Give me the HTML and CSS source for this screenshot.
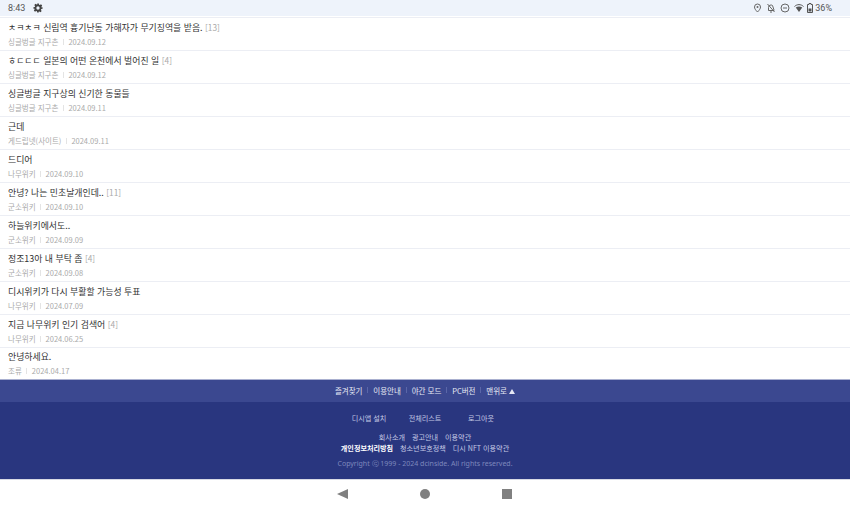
FILE: index.html

```html
<!DOCTYPE html>
<html lang="ko">
<head>
    <meta charset="UTF-8">
    <title>디시인사이드</title>
    <link rel="stylesheet" href="styles.css">
</head>
<body>
    <div class="status-bar">
        <div class="status-left">
            <span>8:43</span>
            <svg class="gear" width="10" height="10" viewBox="0 0 24 24"><path fill="#444" fill-rule="evenodd" d="M10 1h4l.6 3.2 1.9.8 2.7-1.8 2.8 2.8-1.8 2.7.8 1.9L23 10v4l-3.2.6-.8 1.9 1.8 2.7-2.8 2.8-2.7-1.8-1.9.8L14 23h-4l-.6-3.2-1.9-.8-2.7 1.8L2 18l1.8-2.7-.8-1.9L1 14v-4l3.200-.6.8-1.900L3.200 4.800 6 2l2.700 1.800 1.900-.8zM12 8a4 4 0 1 0 0 8 4 4 0 0 0 0-8z"/></svg>
        </div>
        <div class="status-right">
            <svg width="9" height="10" viewBox="0 0 18 20"><path fill="none" stroke="#666" stroke-width="2" d="M9 18c-4-4-6-7-6-10a6 6 0 0 1 12 0c0 3-2 6-6 10z"/><circle cx="9" cy="8" r="2" fill="#666"/></svg>
            <svg width="10" height="10" viewBox="0 0 20 20"><path fill="none" stroke="#666" stroke-width="2" d="M5 15V9a5 5 0 0 1 8-4l3 9v1zM8 18h4M3 2l14 16"/></svg>
            <svg width="10" height="10" viewBox="0 0 20 20"><circle cx="10" cy="10" r="8" fill="none" stroke="#666" stroke-width="2"/><path stroke="#666" stroke-width="2" d="M6 10h8"/></svg>
            <svg class="wifi" width="10" height="10" viewBox="0 0 20 20"><path fill="none" stroke="#555" stroke-width="2" d="M1 7c5-5 13-5 18 0"/><path fill="#555" d="M3.500 9c4-3 9-3 13 0L10 18z"/></svg>
            <svg width="6" height="10" viewBox="0 0 12 20"><path fill="none" stroke="#555" stroke-width="2" d="M4 1h4v2h3v16H1V3h3z"/><path fill="#555" d="M3 11h6v6H3z"/></svg>
            <span>36%</span>
        </div>
    </div>

    <ul class="post-list">
        <li class="post-item">
            <p class="post-title">ㅊㅋㅊㅋ 신림역 흉기난동 가해자가 무기징역을 받음. <span class="reply">[13]</span></p>
            <p class="post-meta"><span>싱글벙글 지구촌</span><i></i><span>2024.09.12</span></p>
        </li>
        <li class="post-item">
            <p class="post-title">ㅎㄷㄷㄷ 일본의 어떤 온천에서 벌어진 일 <span class="reply">[4]</span></p>
            <p class="post-meta"><span>싱글벙글 지구촌</span><i></i><span>2024.09.12</span></p>
        </li>
        <li class="post-item">
            <p class="post-title">싱글벙글 지구상의 신기한 동물들</p>
            <p class="post-meta"><span>싱글벙글 지구촌</span><i></i><span>2024.09.11</span></p>
        </li>
        <li class="post-item">
            <p class="post-title">근데</p>
            <p class="post-meta"><span>게드립넷(사이트)</span><i></i><span>2024.09.11</span></p>
        </li>
        <li class="post-item">
            <p class="post-title">드디어</p>
            <p class="post-meta"><span>나무위키</span><i></i><span>2024.09.10</span></p>
        </li>
        <li class="post-item">
            <p class="post-title">안녕? 나는 민초날개인데.. <span class="reply">[11]</span></p>
            <p class="post-meta"><span>군소위키</span><i></i><span>2024.09.10</span></p>
        </li>
        <li class="post-item">
            <p class="post-title">하늘위키에서도..</p>
            <p class="post-meta"><span>군소위키</span><i></i><span>2024.09.09</span></p>
        </li>
        <li class="post-item">
            <p class="post-title">정조13아 내 부탁 좀 <span class="reply">[4]</span></p>
            <p class="post-meta"><span>군소위키</span><i></i><span>2024.09.08</span></p>
        </li>
        <li class="post-item">
            <p class="post-title">디시위키가 다시 부활할 가능성 투표</p>
            <p class="post-meta"><span>나무위키</span><i></i><span>2024.07.09</span></p>
        </li>
        <li class="post-item">
            <p class="post-title">지금 나무위키 인기 검색어 <span class="reply">[4]</span></p>
            <p class="post-meta"><span>나무위키</span><i></i><span>2024.06.25</span></p>
        </li>
        <li class="post-item last">
            <p class="post-title">안녕하세요.</p>
            <p class="post-meta"><span>조류</span><i></i><span>2024.04.17</span></p>
        </li>
    </ul>

    <footer>
        <nav class="foot-nav">
            <a>즐겨찾기</a><i></i><a>이용안내</a><i></i><a>야간 모드</a><i></i><a>PC버전</a><i></i><a>맨위로 <span class="up"></span></a>
        </nav>
        <div class="foot-body">
            <div class="foot-apps">
                <a>디시앱 설치</a><a>전체리스트</a><a>로그아웃</a>
            </div>
            <div class="foot-links">
                <a>회사소개</a><a>광고안내</a><a>이용약관</a>
            </div>
            <div class="foot-links">
                <a class="strong">개인정보처리방침</a><a>청소년보호정책</a><a>디시 NFT 이용약관</a>
            </div>
            <p class="copyright">Copyright ⓒ 1999 - 2024 dcinside. All rights reserved.</p>
        </div>
    </footer>

    <div class="nav-bar">
        <svg width="12" height="12" viewBox="0 0 12 12"><path fill="#808080" d="M11 1v10L0 6z"/></svg>
        <span class="home"></span>
        <span class="recent"></span>
    </div>
</body>
</html>
```

FILE: styles.css

```css
body, html {
    margin: 0;
    padding: 0;
    height: 510px;
    overflow: hidden;
    background-color: #ffffff;
    font-family: "Noto Sans CJK KR", "Noto Sans", sans-serif;
}

p, ul {
    margin: 0;
    padding: 0;
}

.status-bar {
    display: flex;
    justify-content: space-between;
    align-items: center;
    height: 16px;
    padding: 0 18px 0 8px;
    background-color: #eef3fb;
    color: #555;
    font-family: Roboto, sans-serif;
    font-size: 9px;
}

.status-left, .status-right {
    display: flex;
    align-items: center;
}

.status-left {
    gap: 8px;
}

.status-right {
    gap: 4px;
}

.status-right span {
    margin-left: -2px;
}

.wifi {
    margin-right: -1px;
}

.post-list {
    box-sizing: border-box;
    list-style: none;
    height: 364px;
    padding-top: 1px;
    border-bottom: 1px solid #aab0d0;
}

.post-item {
    box-sizing: border-box;
    height: 33px;
    padding: 1px 8px 0;
    border-top: 1px solid #eceef4;
}

.post-item.last {
    height: 32px;
}

.post-item.last .post-title {
    height: 16px;
    line-height: 16px;
}

.post-title {
    height: 17px;
    line-height: 17px;
    font-size: 8.9px;
    color: #333;
}

.reply {
    color: #aaa;
    font-size: 8.3px;
}

.post-meta {
    display: flex;
    align-items: center;
    height: 11px;
    font-size: 7.5px;
    color: #aaa;
}

.post-meta i {
    width: 1px;
    height: 6px;
    margin: 0 4.5px;
    background-color: #e4e4e4;
}

.foot-nav {
    display: flex;
    justify-content: center;
    align-items: center;
    box-sizing: border-box;
    height: 22px;
    padding-bottom: 2px;
    background-color: #3b4890;
    color: #e6e8f4;
    font-size: 7.5px;
}

.foot-nav i {
    width: 1px;
    height: 6px;
    margin: 0 4.9px;
    background-color: #5a66a8;
}

.up {
    display: inline-block;
    width: 0;
    height: 0;
    border-left: 3px solid transparent;
    border-right: 3px solid transparent;
    border-bottom: 5px solid #e6e8f4;
}

.foot-body {
    box-sizing: border-box;
    height: 77px;
    padding-top: 11px;
    background-color: #29367f;
    color: #c3c8e4;
    font-size: 7.1px;
}

.foot-apps {
    display: grid;
    grid-template-columns: repeat(3, 56px);
    justify-content: center;
    justify-items: center;
    margin-bottom: 8px;
    line-height: 11px;
}

.foot-links {
    display: flex;
    justify-content: center;
    gap: 7px;
    line-height: 11px;
}

.strong {
    color: #ffffff;
    font-weight: 700;
}

.copyright {
    margin-top: 4px;
    text-align: center;
    font-family: "Noto Sans", sans-serif;
    font-size: 7px;
    line-height: 11px;
    color: #7e88bd;
}

.nav-bar {
    display: grid;
    grid-template-columns: repeat(3, 82px);
    justify-content: center;
    justify-items: center;
    align-items: center;
    box-sizing: border-box;
    height: 31px;
    padding-bottom: 2px;
    border-top: 1px solid #d8dae4;
}

.home {
    width: 10px;
    height: 10px;
    border-radius: 50%;
    background-color: #808080;
}

.recent {
    width: 10px;
    height: 10px;
    background-color: #808080;
}
```
